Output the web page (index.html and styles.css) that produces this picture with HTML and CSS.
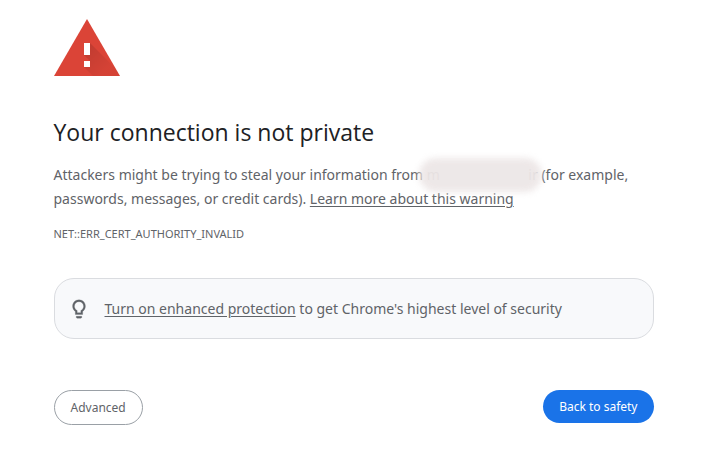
FILE: index.html
```html
<!DOCTYPE html>
<html lang="en">
  <head>
    <meta charset="utf-8">
    <title>Privacy error</title>
    <link rel="stylesheet" href="styles.css">
  </head>
  <body>
    <main class="interstitial">
      <svg class="warning-icon" viewBox="0 0 66 57" aria-hidden="true">
        <defs>
          <linearGradient id="shade" gradientUnits="userSpaceOnUse" x1="34" y1="28" x2="54" y2="48">
            <stop offset="0" stop-color="#000" stop-opacity="0.12"/>
            <stop offset="1" stop-color="#000" stop-opacity="0.03"/>
          </linearGradient>
        </defs>
        <path fill="#db4437" d="M33 0 66 57H0z"/>
        <path fill="url(#shade)" d="M36 24 53 41 62 50 66 57H39L30 48V42H36L30 36H36z"/>
        <path fill="#fff" d="M30 24h6v12h-6zM30 42h6v6h-6z"/>
      </svg>

      <h1>Your connection is not private</h1>
      <p class="message">Attackers might be trying to steal your information from <span class="host"><span>m</span><span>ir</span></span> (for example, passwords, messages, or credit cards). <a href="#">Learn more about this warning</a></p>
      <p class="error-code">NET::ERR_CERT_AUTHORITY_INVALID</p>

      <div class="promo">
        <svg class="bulb" viewBox="0 0 24 24" aria-hidden="true">
          <path fill="#5f6368" stroke="#5f6368" stroke-width=".3" d="M9 21c0 .5.4 1 1 1h4c.6 0 1-.5 1-1v-1H9v1zm3-19C8.1 2 5 5.1 5 9c0 2.4 1.2 4.5 3 5.7V18h8v-3.3c1.8-1.3 3-3.4 3-5.7 0-3.9-3.1-7-7-7zm2.900 11.1-.9.6V16h-4v-2.300l-.9-.6C7.800 12.200 7 10.600 7 9c0-2.800 2.200-5 5-5s5 2.200 5 5c0 1.600-.8 3.200-2.100 4.100z"/>
        </svg>
        <p><a href="#">Turn on enhanced protection</a> to get Chrome's highest level of security</p>
      </div>

      <div class="buttons">
        <button type="button" class="secondary">Advanced</button>
        <button type="button" class="primary">Back to safety</button>
      </div>
    </main>
  </body>
</html>
```
FILE: styles.css
```css
body {
  margin: 0;
  background: #fff;
  color: #5f6368;
  font-family: "Noto Sans", "Segoe UI", sans-serif;
  font-size: 14px;
  line-height: 24px;
}
.interstitial {
  max-width: 600px;
  margin: 0 auto;
  padding-top: 19px;
}
.warning-icon {
  display: block;
  width: 66px;
  height: 57px;
}
h1 {
  margin: 40px 0 15px;
  color: #202124;
  font-family: "Open Sans", "Segoe UI", sans-serif;
  font-size: 23px;
  font-weight: normal;
  line-height: 32px;
}
p {
  margin: 0;
}
a {
  color: inherit;
  text-underline-offset: 2px;
}
.error-code {
  margin-top: 11px;
  font-size: 11px;
}
.host {
  position: relative;
  display: inline-flex;
  justify-content: space-between;
  width: 111px;
}
/* smudge over the host name */
.host::after {
  content: "";
  position: absolute;
  inset: -5px -4px -5px -8px;
  border-radius: 18px;
  background: #ede7e7;
  opacity: 0.95;
  filter: blur(3px);
}
.promo {
  display: flex;
  align-items: center;
  gap: 15px;
  margin-top: 32px;
  padding: 18px 13px 17px;
  border: 1px solid #dadce0;
  border-radius: 20px;
  background: #f8f9fb;
}
.bulb {
  flex: none;
  width: 22px;
  height: 22px;
}
.buttons {
  display: flex;
  justify-content: space-between;
  align-items: flex-start;
  margin-top: 51px;
}
button {
  padding: 8px 16px;
  border: 0;
  border-radius: 20px;
  font-family: inherit;
  font-size: 12px;
  line-height: 17px;
}
.primary {
  background: #1a73e8;
  color: #fff;
}
.secondary {
  border: 1px solid #9aa0a6;
  background: #fff;
  color: #5f6368;
}
```
